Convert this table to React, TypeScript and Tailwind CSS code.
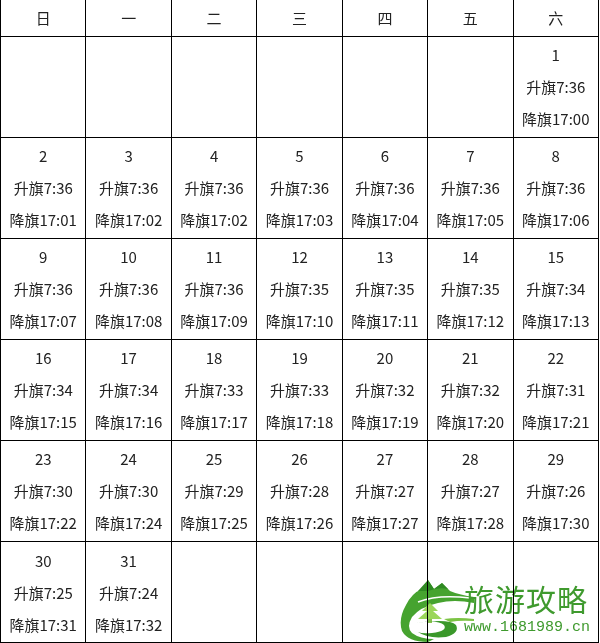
const HEAD = ['日', '一', '二', '三', '四', '五', '六'];

// [day, 升旗, 降旗]
const DAYS: [number, string, string][] = [
  [1, '7:36', '17:00'],
  [2, '7:36', '17:01'],
  [3, '7:36', '17:02'],
  [4, '7:36', '17:02'],
  [5, '7:36', '17:03'],
  [6, '7:36', '17:04'],
  [7, '7:36', '17:05'],
  [8, '7:36', '17:06'],
  [9, '7:36', '17:07'],
  [10, '7:36', '17:08'],
  [11, '7:36', '17:09'],
  [12, '7:35', '17:10'],
  [13, '7:35', '17:11'],
  [14, '7:35', '17:12'],
  [15, '7:34', '17:13'],
  [16, '7:34', '17:15'],
  [17, '7:34', '17:16'],
  [18, '7:33', '17:17'],
  [19, '7:33', '17:18'],
  [20, '7:32', '17:19'],
  [21, '7:32', '17:20'],
  [22, '7:31', '17:21'],
  [23, '7:30', '17:22'],
  [24, '7:30', '17:24'],
  [25, '7:29', '17:25'],
  [26, '7:28', '17:26'],
  [27, '7:27', '17:27'],
  [28, '7:27', '17:28'],
  [29, '7:26', '17:30'],
  [30, '7:25', '17:31'],
  [31, '7:24', '17:32'],
];

const cells: ([number, string, string] | null)[] = [
  ...Array.from({ length: 6 }, () => null),
  ...DAYS,
  ...Array.from({ length: 5 }, () => null),
];

function Logo() {
  return (
    <svg width="76" height="68" viewBox="0 0 76 68">
      {/* mountains + G swoosh */}
      <path
        d="M8 30 Q14 18 24 14 L30 5 L36 14 L44 8 L52 16 Q62 20 76 22 L76 28 Q56 24 40 28 Q22 32 14 42 Q8 52 14 58 Q22 64 36 64 L30 67 Q10 67 4 56 Q0 44 8 30 Z"
        fill="#46a32f"
      />
      <path d="M20 16 L30 5 L36 14 L44 8 L50 14 Q40 12 30 16 Z" fill="#2f8a22" />
      <path d="M20 27 Q40 19 72 23" stroke="#fff" strokeWidth="1.5" fill="none" />
      {/* tree */}
      <path d="M32 28 L24 36 L29 36 L20 44 L44 44 L35 36 L40 36 Z" fill="#9bd65a" />
      <rect x="30" y="44" width="4" height="4" fill="#86c24c" />
      {/* S swoosh */}
      <path
        d="M16 48 Q40 44 46 50 Q50 56 34 58 Q24 59 20 57 Q30 64 48 62 Q62 58 58 50 Q52 43 16 48 Z"
        fill="#3a982a"
      />
      <path d="M46 44 Q60 42 76 44 L76 46 Q62 45 52 47 Z" fill="#7cc444" />
    </svg>
  );
}

export default function App() {
  return (
    <div className="relative w-[600px] h-[643px] bg-white overflow-hidden font-['Noto_Sans_CJK_SC','Noto_Sans',sans-serif] text-[15px] text-[#222]">
      <div className="grid grid-cols-7 grid-rows-[37px_repeat(6,101px)] w-[599px] border-l border-black">
        {HEAD.map((h) => (
          <div key={h} className="flex items-center justify-center border-r border-b border-black">
            {h}
          </div>
        ))}
        {cells.map((c, i) => (
          <div
            key={i}
            className={`flex flex-col items-center justify-center leading-[32px] border-r border-black ${i < 35 ? 'border-b' : ''}`}
          >
            {c && (
              <>
                <span>{c[0]}</span>
                <span>升旗{c[1]}</span>
                <span>降旗{c[2]}</span>
              </>
            )}
          </div>
        ))}
      </div>
      <div className="absolute left-0 bottom-0 w-[599px] h-px bg-black" />

      {/* watermark */}
      <div className="absolute left-[398px] top-[575px] flex items-start mix-blend-multiply pointer-events-none">
        <Logo />
        <div className="flex flex-col -ml-[10px] pt-[4px]">
          <span className="text-[30px] leading-[38px] tracking-[1px] text-[#3f9a2e] font-['Noto_Sans_CJK_SC',serif]">
            旅游攻略
          </span>
          <span className="mt-[4px] text-[15px] leading-[14px] text-[#3f9a2e] font-['Liberation_Mono',monospace]">
            www.1681989.cn
          </span>
        </div>
      </div>
    </div>
  );
}
